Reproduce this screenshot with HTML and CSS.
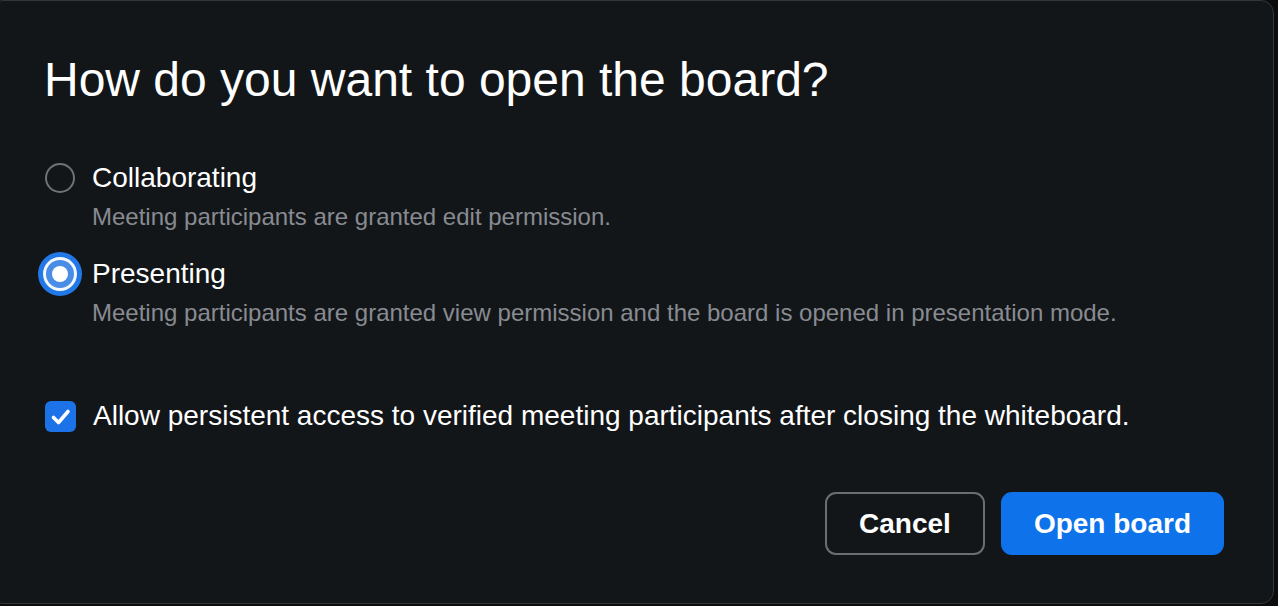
FILE: index.html
```html
<!DOCTYPE html>
<html lang="en">
<head>
<meta charset="utf-8">
<title>Open board</title>
<link rel="stylesheet" href="styles.css">
</head>
<body>
<div class="dialog">
  <h1 class="title">How do you want to open the board?</h1>
  <div class="options">
    <div class="option">
      <span class="radio"></span>
      <span class="label">Collaborating</span>
      <span class="desc">Meeting participants are granted edit permission.</span>
    </div>
    <div class="option option-second">
      <span class="radio radio-checked"></span>
      <span class="label">Presenting</span>
      <span class="desc">Meeting participants are granted view permission and the board is opened in presentation mode.</span>
    </div>
  </div>
  <div class="check-row">
    <span class="checkbox">
      <svg width="31" height="31" viewBox="0 0 31 31"><polyline points="8.5,16.5 13.5,21.5 23,10.5" fill="none" stroke="#fff" stroke-width="3.6" stroke-linecap="round" stroke-linejoin="round"/></svg>
    </span>
    <span class="label">Allow persistent access to verified meeting participants after closing the whiteboard.</span>
  </div>
  <div class="actions">
    <button class="btn btn-cancel">Cancel</button>
    <button class="btn btn-primary">Open board</button>
  </div>
</div>
</body>
</html>
```
FILE: styles.css
```css
html, body {
  margin: 0;
  padding: 0;
  background: #0b0c0e;
  overflow: hidden;
}
body {
  font-family: "Liberation Sans", Arial, Helvetica, sans-serif;
  color: #ffffff;
}
.dialog {
  box-sizing: border-box;
  width: 1284px;
  height: 604px;
  margin-left: -10px;
  padding: 51px 49px 0 53px;
  background: #131619;
  border: 1px solid #33363a;
  border-radius: 13px;
  display: flex;
  flex-direction: column;
}
.title {
  margin: 0;
  font-size: 48px;
  line-height: 56px;
  font-weight: 400;
  letter-spacing: 0;
}
.options {
  margin-top: 52px;
  display: flex;
  flex-direction: column;
}
.option {
  display: grid;
  grid-template-columns: 30px 1fr;
  column-gap: 18px;
  row-gap: 6px;
  align-items: center;
}
.option-second {
  margin-top: 24px;
}
.label {
  font-size: 28px;
  line-height: 36px;
}
.desc {
  grid-column: 2;
  font-size: 24px;
  line-height: 30px;
  color: #888b91;
}
.radio {
  box-sizing: border-box;
  width: 30px;
  height: 30px;
  margin-left: 1px;
  border: 2px solid #6f7277;
  border-radius: 50%;
}
.radio-checked {
  position: relative;
  width: 28px;
  height: 28px;
  margin-left: 2px;
  border: none;
  background: #4a8de6;
  box-shadow: 0 0 0 3px #f4f7fc, 0 0 0 8px #2378e8;
}
.radio-checked::after {
  content: "";
  position: absolute;
  left: 6px;
  top: 6px;
  width: 16px;
  height: 16px;
  border-radius: 50%;
  background: #ffffff;
}
.check-row {
  margin-top: 70px;
  display: flex;
  align-items: center;
  gap: 17px;
}
.checkbox {
  width: 31px;
  height: 31px;
  margin-left: 1px;
  border-radius: 6px;
  background: #1c73e8;
  display: flex;
  flex: none;
}
.actions {
  margin-top: 58px;
  display: flex;
  justify-content: flex-end;
  gap: 16px;
}
.btn {
  box-sizing: border-box;
  height: 63px;
  font-family: "Liberation Sans", Arial, Helvetica, sans-serif;
  font-size: 28px;
  font-weight: 700;
  color: #ffffff;
  border-radius: 11px;
  padding: 0 32px;
  cursor: pointer;
}
.btn-cancel {
  background: transparent;
  border: 2px solid #6a6d72;
}
.btn-primary {
  background: #0e72eb;
  border: 2px solid #0e72eb;
  padding: 0 31px;
}
```
